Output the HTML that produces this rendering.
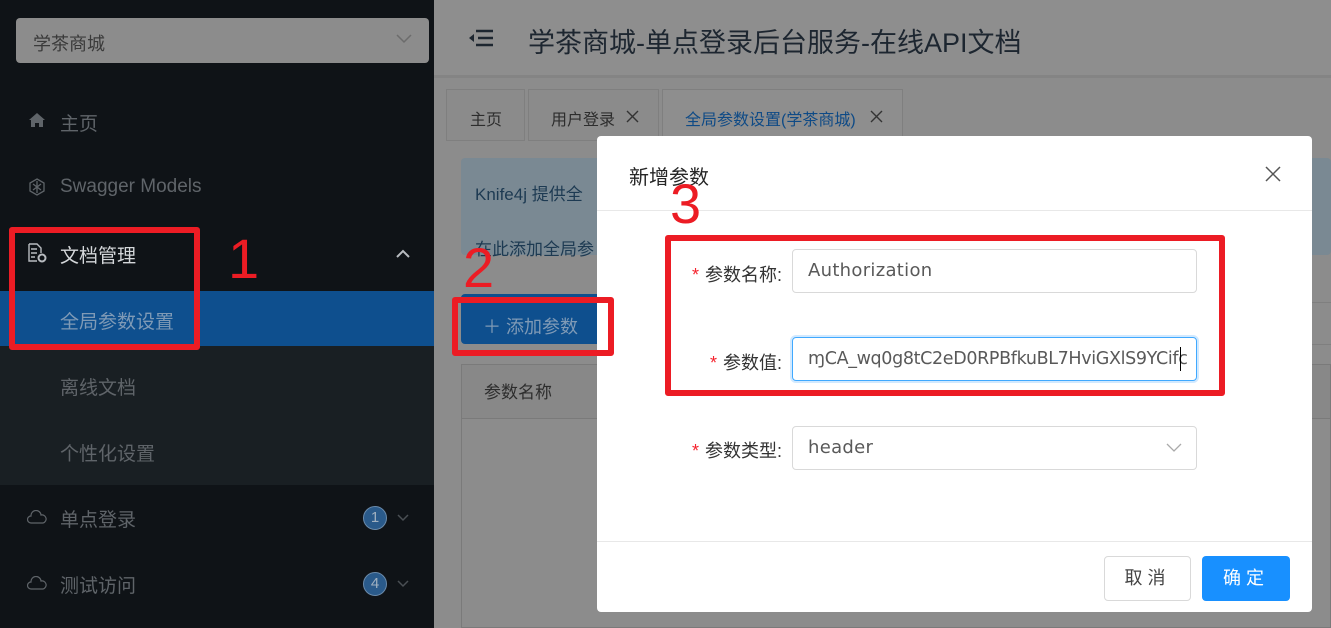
<!DOCTYPE html>
<html><head><meta charset="utf-8"><style>
*{box-sizing:border-box;margin:0;padding:0}
body{width:1331px;height:628px;overflow:hidden;position:relative;background:#8c8c8c;font-family:"Liberation Sans","Noto Sans CJK SC",sans-serif}
.a{position:absolute}
.sb{left:0;top:0;width:434px;height:628px;background:#0f1317}
.mi{position:absolute;left:60px;font-size:19px;color:#5f6469}
.red{position:absolute;border:6px solid #ec1c24;border-radius:3px}
.num{position:absolute;color:#ec1c24;font-size:56px;font-family:"Liberation Sans",sans-serif;line-height:1}
.inp{position:absolute;left:792px;width:405px;height:44px;border:1px solid #d9d9d9;border-radius:4px;font-size:18px;color:#595959;padding-left:15px;line-height:42px;font-family:"DejaVu Sans","Liberation Sans",sans-serif;letter-spacing:0.3px}
.lab{position:absolute;font-size:18px;color:#333;text-align:right;width:152px}
.lab b{color:#f5222d;font-weight:normal;margin-right:6px}
</style></head><body>
<div class="a sb"></div>
<div class="a" style="left:16px;top:18px;width:413px;height:45px;background:#8c8c8c;border-radius:4px"></div>
<div class="a" style="left:33px;top:30px;font-size:18px;color:#3a3a3a">学茶商城</div>
<svg class="a" style="left:396px;top:34px" width="16" height="10"><path d="M1 1l7 7 7-7" stroke="#6c6c6c" fill="none" stroke-width="1.5"/></svg>
<svg class="a" style="left:28px;top:112px" width="18" height="16"><path d="M9 1L1 8h2v7h4v-4h4v4h4V8h2z" fill="#5f6469"/></svg>
<div class="mi" style="top:109px">主页</div>
<svg class="a" style="left:28px;top:178px" width="18" height="18"><path d="M9 1l7 4v8l-7 4-7-4V5z M5 6l8 6 M13 6l-8 6 M9 3v12" stroke="#5f6469" fill="none" stroke-width="1.3"/></svg>
<div class="mi" style="top:176px;font-size:19px;color:#5f6469">Swagger Models</div>
<svg class="a" style="left:27px;top:243px" width="20" height="20"><path d="M2 1h8l4 4v5 M2 1v17h8 M4 6h6 M4 10h6 M4 14h4" stroke="#b8bcc0" fill="none" stroke-width="1.4"/><circle cx="15" cy="15" r="3.5" stroke="#b8bcc0" fill="none" stroke-width="2"/></svg>
<div class="mi" style="top:241px;color:#d4d7da">文档管理</div>
<svg class="a" style="left:396px;top:249px" width="14" height="9"><path d="M1 8l6-6 6 6" stroke="#b8bcc0" fill="none" stroke-width="2"/></svg>
<div class="a" style="left:0;top:291px;width:434px;height:194px;background:#191f23"></div>
<div class="a" style="left:0;top:291px;width:434px;height:55px;background:#0e4f8e"></div>
<div class="mi" style="top:307px;color:#7f9ab6">全局参数设置</div>
<div class="mi" style="top:373px">离线文档</div>
<div class="mi" style="top:439px">个性化设置</div>
<svg class="a" style="left:27px;top:510px" width="20" height="14"><path d="M4 13a3 3 0 0 1 0-7 5 5 0 0 1 10-1 4 4 0 0 1 2 8z" stroke="#5f6469" fill="none" stroke-width="1.2"/></svg>
<div class="mi" style="top:505px">单点登录</div>
<div class="a" style="left:363px;top:506px;width:24px;height:24px;border-radius:50%;background:#2a5a8a;border:1px solid #6a8aaa;color:#a0b0c0;font-size:15px;text-align:center;line-height:22px">1</div>
<svg class="a" style="left:397px;top:514px" width="12" height="8"><path d="M1 1l5 5 5-5" stroke="#4a4f54" fill="none" stroke-width="1.5"/></svg>
<svg class="a" style="left:27px;top:576px" width="20" height="14"><path d="M4 13a3 3 0 0 1 0-7 5 5 0 0 1 10-1 4 4 0 0 1 2 8z" stroke="#5f6469" fill="none" stroke-width="1.2"/></svg>
<div class="mi" style="top:571px">测试访问</div>
<div class="a" style="left:363px;top:572px;width:24px;height:24px;border-radius:50%;background:#2a5a8a;border:1px solid #6a8aaa;color:#a0b0c0;font-size:15px;text-align:center;line-height:22px">4</div>
<svg class="a" style="left:397px;top:580px" width="12" height="8"><path d="M1 1l5 5 5-5" stroke="#4a4f54" fill="none" stroke-width="1.5"/></svg>

<div class="a" style="left:434px;top:0;width:897px;height:78px;background:#8e8e8e;border-bottom:3px solid #848484"></div>
<svg class="a" style="left:468px;top:27px" width="26" height="22"><path d="M8 4h17 M10 11h15 M8 18h17" stroke="#1d2630" stroke-width="2.5"/><path d="M1 11l5-4v8z" fill="#1d2630"/></svg>
<div class="a" style="left:528px;top:21px;font-size:27px;color:#1d2630">学茶商城-单点登录后台服务-在线API文档</div>
<div class="a" style="left:446px;top:89px;width:79px;height:52px;border:1px solid #7f7f7f;background:#8b8b8b"></div>
<div class="a" style="left:470px;top:106px;font-size:16px;color:#2d2d2d">主页</div>
<div class="a" style="left:528px;top:89px;width:131px;height:52px;border:1px solid #7f7f7f;background:#8b8b8b"></div>
<div class="a" style="left:551px;top:106px;font-size:16px;color:#2d2d2d">用户登录</div>
<svg class="a" style="left:626px;top:110px" width="13" height="13"><path d="M1 1l11 11M12 1L1 12" stroke="#333" stroke-width="1.4"/></svg>
<div class="a" style="left:662px;top:89px;width:241px;height:52px;border:1px solid #7f7f7f;background:#8e8e8e"></div>
<div class="a" style="left:685px;top:106px;font-size:16px;color:#0e4a86">全局参数设置(学茶商城)</div>
<svg class="a" style="left:870px;top:110px" width="13" height="13"><path d="M1 1l11 11M12 1L1 12" stroke="#333" stroke-width="1.4"/></svg>
<div class="a" style="left:461px;top:158px;width:870px;height:97px;background:#7a8993;border-radius:4px"></div>
<div class="a" style="left:475px;top:180px;font-size:17px;color:#1d3a52">Knife4j 提供全</div>
<div class="a" style="left:475px;top:235px;font-size:17px;color:#1d3a52">在此添加全局参</div>
<div class="a" style="left:461px;top:294px;width:150px;height:50px;background:#0e4f8e;border-radius:4px"></div>
<div class="a" style="left:483px;top:313px;font-size:18px;color:#7f9ab6">＋ 添加参数</div>
<div class="a" style="left:461px;top:364px;width:870px;height:264px;border:1px solid #7a7a7a;background:#8c8c8c"></div>
<div class="a" style="left:461px;top:364px;width:870px;height:55px;border:1px solid #7a7a7a;background:#888"></div>
<div class="a" style="left:484px;top:378px;font-size:17px;color:#2d2d2d">参数名称</div>
<div class="a" style="left:1312px;top:302px;width:19px;height:1px;background:#7f7f7f"></div>
<div class="a" style="left:1312px;top:344px;width:19px;height:1px;background:#7f7f7f"></div>

<div class="a" style="left:597px;top:136px;width:715px;height:476px;background:#fff;border-radius:4px"></div>
<div class="a" style="left:597px;top:210px;width:715px;height:1px;background:#e8e8e8"></div>
<div class="a" style="left:597px;top:541px;width:715px;height:1px;background:#e8e8e8"></div>
<div class="a" style="left:629px;top:161px;font-size:20px;color:#262626">新增参数</div>
<svg class="a" style="left:1265px;top:166px" width="16" height="16"><path d="M1 1l14 14M15 1L1 15" stroke="#555" stroke-width="1.5"/></svg>
<div class="lab" style="left:630px;top:261px"><b>*</b>参数名称:</div>
<div class="lab" style="left:630px;top:349px"><b>*</b>参数值:</div>
<div class="lab" style="left:630px;top:437px"><b>*</b>参数类型:</div>
<div class="inp" style="top:249px">Authorization</div>
<div class="inp" style="top:337px;border-color:#40a9ff;box-shadow:0 0 0 2px rgba(24,144,255,.2);overflow:hidden;white-space:nowrap;font-size:17.5px;letter-spacing:-0.35px">ɱCA_wq0g8tC2eD0RPBfkuBL7HviGXlS9YCifc</div>
<div class="a" style="left:1180px;top:347px;width:1px;height:24px;background:#000"></div>
<div class="inp" style="top:426px">header</div>
<svg class="a" style="left:1166px;top:443px" width="16" height="10"><path d="M1 1l7 7 7-7" stroke="#aaa" fill="none" stroke-width="1.3"/></svg>
<div class="a" style="left:1104px;top:556px;width:87px;height:45px;border:1px solid #d9d9d9;border-radius:4px;font-size:18px;color:#444;text-align:center;line-height:43px;letter-spacing:5px">取消</div>
<div class="a" style="left:1202px;top:556px;width:88px;height:45px;background:#1890ff;border-radius:4px;font-size:18px;color:#fff;text-align:center;line-height:45px;letter-spacing:5px">确定</div>

<div class="red" style="left:9px;top:227px;width:191px;height:123px"></div>
<div class="num" style="left:228px;top:231px">1</div>
<div class="red" style="left:452px;top:297px;width:162px;height:59px"></div>
<div class="num" style="left:463px;top:240px">2</div>
<div class="red" style="left:665px;top:235px;width:560px;height:161px"></div>
<div class="num" style="left:670px;top:176px">3</div>
</body></html>
